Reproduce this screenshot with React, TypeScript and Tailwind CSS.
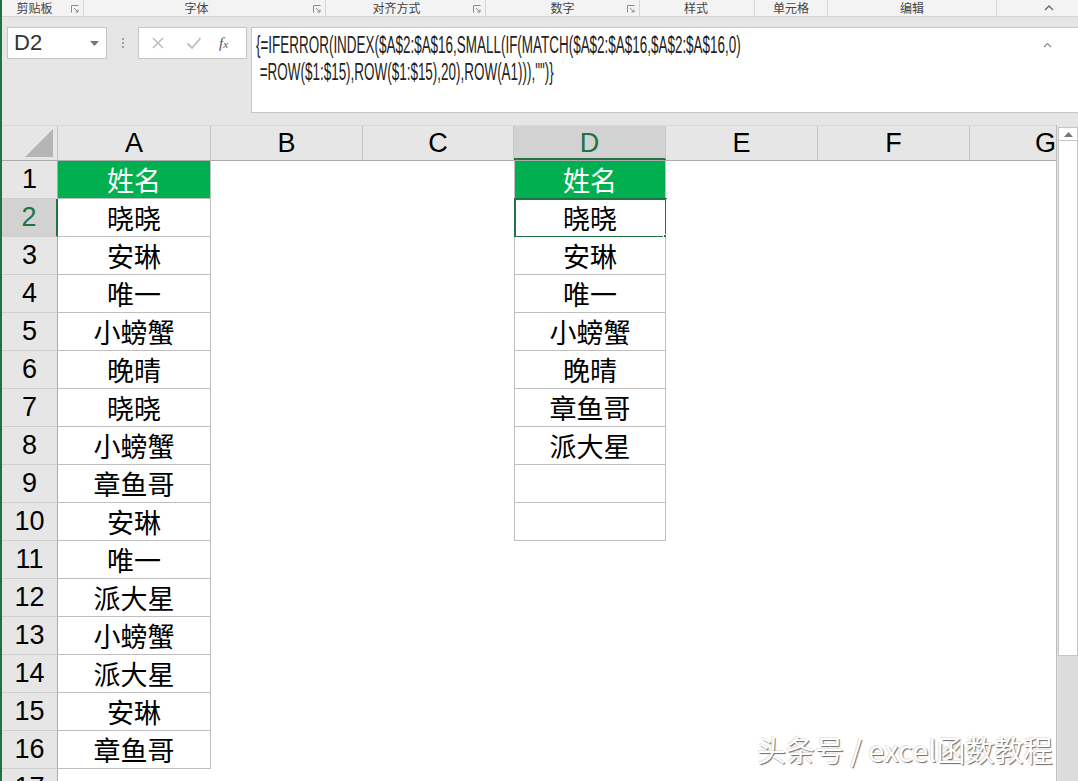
import React from "react";

const cols = [
  { key: "A", w: "w-[153px]" },
  { key: "B", w: "w-[152px]" },
  { key: "C", w: "w-[151px]" },
  { key: "D", w: "w-[152px]" },
  { key: "E", w: "w-[152px]" },
  { key: "F", w: "w-[152px]" },
  { key: "G", w: "w-[152px]" },
];

const colA = ["姓名", "晓晓", "安琳", "唯一", "小螃蟹", "晚晴", "晓晓", "小螃蟹", "章鱼哥", "安琳", "唯一", "派大星", "小螃蟹", "派大星", "安琳", "章鱼哥"];
const colD = ["姓名", "晓晓", "安琳", "唯一", "小螃蟹", "晚晴", "章鱼哥", "派大星", "", ""];

const latin = "font-['Liberation_Sans',Arial,sans-serif]";
const cjk = "font-['Noto_Sans_CJK_SC','Noto_Sans',sans-serif]";

function Launcher() {
  return (
    <svg width="8" height="8" viewBox="0 0 8 8" className="absolute right-[4px] top-[5px]">
      <path d="M0.5 7.5V0.5H7.5" fill="none" stroke="#8a8a8a" strokeWidth="1" />
      <path d="M3 3L7 7M7 4.5V7H4.5" fill="none" stroke="#8a8a8a" strokeWidth="1" />
    </svg>
  );
}

function RibbonGroup({ label, w, pr, launcher }: { label: string; w: string; pr: string; launcher?: boolean }) {
  return (
    <div className={`relative flex h-full items-center justify-center border-r border-[#d6d6d6] ${w} ${pr}`}>
      <span className="leading-none">{label}</span>
      {launcher && <Launcher />}
    </div>
  );
}

function Ribbon() {
  return (
    <div className={`flex h-[17px] shrink-0 border-b border-[#d4d4d4] bg-[#f3f3f3] text-[12px] text-[#444] ${cjk}`}>
      <RibbonGroup label="剪贴板" w="w-[82px]" pr="pr-[16px]" launcher />
      <RibbonGroup label="字体" w="w-[242px]" pr="pr-[16px]" launcher />
      <RibbonGroup label="对齐方式" w="w-[160px]" pr="pr-[18px]" launcher />
      <RibbonGroup label="数字" w="w-[154px]" pr="pr-[0px]" launcher />
      <RibbonGroup label="样式" w="w-[115px]" pr="pr-[2px]" />
      <RibbonGroup label="单元格" w="w-[73px]" pr="pr-[0px]" />
      <RibbonGroup label="编辑" w="w-[169px]" pr="pr-[0px]" />
      <div className="flex flex-1 items-center justify-end pr-[24px]">
        <svg width="10" height="6" viewBox="0 0 10 6">
          <path d="M1 5L5 1L9 5" fill="none" stroke="#666" strokeWidth="1.3" />
        </svg>
      </div>
    </div>
  );
}

function FormulaBar() {
  return (
    <div className="flex h-[108px] shrink-0 items-start pt-[10px]">
      <div className={`ml-[5px] flex h-[32px] w-[100px] shrink-0 items-center justify-between border border-[#c6c6c6] bg-white pl-[6px] pr-[7px] text-[22px] text-[#333] ${latin}`}>
        <span className="leading-none">D2</span>
        <svg width="9" height="5" viewBox="0 0 9 5">
          <path d="M0 0H9L4.5 5Z" fill="#777" />
        </svg>
      </div>
      <div className="flex h-[32px] w-[31px] shrink-0 flex-col items-center justify-center gap-[2px]">
        <span className="h-[2px] w-[2px] bg-[#a0a0a0]" />
        <span className="h-[2px] w-[2px] bg-[#a0a0a0]" />
        <span className="h-[2px] w-[2px] bg-[#a0a0a0]" />
      </div>
      <div className="flex h-[32px] w-[109px] shrink-0 items-center border border-[#c6c6c6] bg-white">
        <svg width="14" height="14" viewBox="0 0 14 14" className="ml-[12px]">
          <path d="M2 2L12 12M12 2L2 12" stroke="#bdbdbd" strokeWidth="1.6" />
        </svg>
        <svg width="16" height="14" viewBox="0 0 16 14" className="ml-[21px]">
          <path d="M1.5 7.5L6 12L14.5 2" fill="none" stroke="#bdbdbd" strokeWidth="1.8" />
        </svg>
        <span className="ml-[17px] font-['Liberation_Serif',serif] text-[15px] italic leading-none text-[#555]">
          f<span className="text-[11px]">x</span>
        </span>
      </div>
      <div className="relative ml-[4px] h-[86px] min-w-0 flex-1 overflow-hidden border border-r-0 border-[#c6c6c6] bg-white pl-[4px] pt-[4px]">
        <div className={`origin-left scale-x-[0.585] whitespace-pre text-[23px] leading-[27px] text-[#222] ${latin}`}>
          <div>{"{=IFERROR(INDEX($A$2:$A$16,SMALL(IF(MATCH($A$2:$A$16,$A$2:$A$16,0)"}</div>
          <div>{' =ROW($1:$15),ROW($1:$15),20),ROW(A1))),"")}'}</div>
        </div>
        <svg width="9" height="6" viewBox="0 0 9 6" className="absolute right-[26px] top-[14px]">
          <path d="M1 5L4.5 1.5L8 5" fill="none" stroke="#888" strokeWidth="1.2" />
        </svg>
      </div>
    </div>
  );
}

function HeaderRow() {
  return (
    <div className={`flex h-[36px] shrink-0 border-b border-[#ababab] border-t border-t-[#d8d8d8] ${latin} text-[27px]`}>
      <div className="relative w-[56px] shrink-0 border-r border-[#c6c6c6]">
        <svg width="30" height="30" viewBox="0 0 30 30" className="absolute bottom-[2px] right-[3px]">
          <path d="M29 1V29H1Z" fill="#b5b5b5" />
        </svg>
      </div>
      {cols.map((c) => (
        <div
          key={c.key}
          className={`flex shrink-0 items-center justify-center border-r border-[#c6c6c6] ${c.w} ${
            c.key === "D" ? "border-b-2 border-b-[#217346] bg-[#d2d2d2] pt-[2px] text-[#217346]" : "text-black"
          }`}
        >
          <span className="leading-none">{c.key}</span>
        </div>
      ))}
    </div>
  );
}

function Cell({ col, row }: { col: string; row: number }) {
  const w = cols.find((c) => c.key === col)!.w;
  let text = "";
  let cls = "";
  if (col === "A" && row <= 16) {
    text = colA[row - 1];
    cls = "border-r border-b border-[#bfbfbf]";
  }
  if (col === "D" && row <= 10) {
    text = colD[row - 1];
    cls = "border-l border-r border-b border-[#bfbfbf]";
  }
  const header = row === 1 && (col === "A" || col === "D");
  return (
    <div
      className={`relative flex shrink-0 items-center justify-center text-[27px] ${cjk} ${w} ${cls} ${
        header ? "bg-[#00b050] text-white" : "bg-white text-black"
      }`}
    >
      <span className="leading-none">{text}</span>
      {col === "D" && row === 2 && (
        <>
          <div className="absolute -left-px -top-px bottom-[-2px] right-[-2px] border-2 border-[#217346]" />
          <div className="absolute bottom-[-4px] right-[-4px] h-[6px] w-[6px] border border-white bg-[#217346]" />
        </>
      )}
    </div>
  );
}

function BodyRow({ row }: { row: number }) {
  const sel = row === 2;
  return (
    <div className="flex h-[38px] shrink-0">
      <div
        className={`flex w-[56px] shrink-0 items-center justify-center border-b border-[#d0d0d0] ${latin} text-[27px] ${
          sel ? "border-r-2 border-r-[#217346] bg-[#d2d2d2] text-[#217346]" : "border-r border-r-[#ababab] bg-[#e6e6e6] text-black"
        }`}
      >
        <span className="leading-none">{row}</span>
      </div>
      {cols.map((c) => (
        <Cell key={c.key} col={c.key} row={row} />
      ))}
    </div>
  );
}

function Scrollbar() {
  return (
    <div className="flex w-[21px] shrink-0 flex-col pl-[1px] pt-[2px]">
      <div className="flex h-[14px] items-center justify-center border border-[#c6c6c6] bg-white">
        <svg width="9" height="5" viewBox="0 0 9 5">
          <path d="M0 5H9L4.5 0Z" fill="#777" />
        </svg>
      </div>
      <div className="h-[515px] border border-t-0 border-[#c6c6c6] bg-white" />
      <div className="flex-1 bg-[#dcdcdc]" />
    </div>
  );
}

export default function App() {
  const rows = Array.from({ length: 17 }, (_, i) => i + 1);
  return (
    <div className="relative flex h-[781px] w-[1078px] flex-col overflow-hidden border-l-2 border-[#217346] bg-[#e6e6e6]">
      <Ribbon />
      <FormulaBar />
      <div className="flex min-h-0 flex-1">
        <div className="flex w-[1055px] shrink-0 flex-col overflow-hidden border-r border-[#bdbdbd]">
          <HeaderRow />
          <div className="flex flex-col bg-white">
            {rows.map((r) => (
              <BodyRow key={r} row={r} />
            ))}
          </div>
        </div>
        <Scrollbar />
      </div>
      <div
        className={`absolute left-[755px] top-[735px] whitespace-nowrap text-[29px] leading-none text-white ${cjk} [text-shadow:1px_1px_1px_#6b6b6b,-1px_-1px_0_#e5e5e5]`}
      >
        头条号 / excel函数教程
      </div>
    </div>
  );
}
